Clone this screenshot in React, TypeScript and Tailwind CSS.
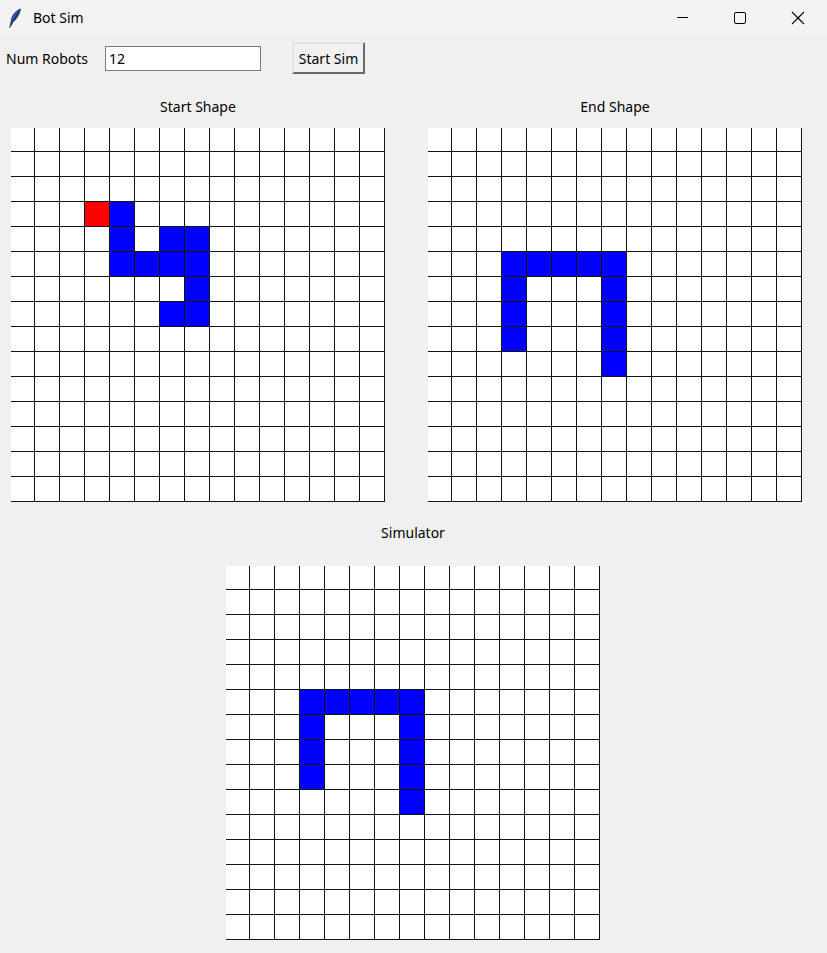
import React from "react";

type Cell = [number, number];

const startBlue: Cell[] = [
  [4, 3], [4, 4], [4, 5], [5, 5], [6, 4], [7, 4],
  [6, 5], [7, 5], [7, 6], [6, 7], [7, 7],
];
const startRed: Cell[] = [[3, 3]];

const endBlue: Cell[] = [
  [3, 5], [4, 5], [5, 5], [6, 5], [7, 5],
  [3, 6], [3, 7], [3, 8],
  [7, 6], [7, 7], [7, 8], [7, 9],
];

const has = (list: Cell[], c: number, r: number) =>
  list.some(([x, y]) => x === c && y === r);

const Board = ({ blue, red = [] }: { blue: Cell[]; red?: Cell[] }) => {
  const cells = [];
  for (let r = 0; r < 15; r++) {
    for (let c = 0; c < 15; c++) {
      let color = "bg-white";
      if (has(red, c, r)) color = "bg-[#ff0000]";
      else if (has(blue, c, r)) color = "bg-[#0000ff]";
      cells.push(
        <div
          key={`${c}-${r}`}
          className={`${color} border-r border-b border-[#141414]`}
        />
      );
    }
  }
  return (
    <div className="grid w-[374px] h-[374px] grid-cols-[24px_repeat(14,25px)] grid-rows-[24px_repeat(14,25px)] bg-white">
      {cells}
    </div>
  );
};

const Feather = () => (
  <svg width="14" height="20" viewBox="0 0 14 20">
    <path
      d="M12.5 1 C7 3 3.5 8 3 14 L2.5 17 L4 14.5 C8 12 11.5 7 12.5 1 Z"
      fill="#2a5db0"
      stroke="#1c2f55"
      strokeWidth="0.8"
    />
    <path d="M11 3 L3 17.5" stroke="#0f1c3a" strokeWidth="0.9" />
    <path d="M3 17 L1.5 19.5" stroke="#1c2f55" strokeWidth="1.2" />
  </svg>
);

export default function App() {
  return (
    <div
      className="w-[827px] h-[953px] bg-[#f0f0f0] flex flex-col text-[15px] text-black"
      style={{ fontFamily: '"Noto Sans", "Open Sans", sans-serif' }}
    >
      {/* title bar */}
      <div className="h-[35px] bg-[#f3f3f3] flex items-center">
        <div className="ml-[8px] w-[14px] flex items-center">
          <Feather />
        </div>
        <span className="ml-[11px] text-[14px]">Bot Sim</span>
        <div className="ml-auto flex items-center h-full">
          <div className="w-[58px] h-full flex items-center justify-center">
            <div className="w-[11px] h-px bg-black" />
          </div>
          <div className="w-[58px] h-full flex items-center justify-center">
            <div className="w-[12px] h-[12px] border border-black rounded-[2px]" />
          </div>
          <div className="w-[58px] h-full flex items-center justify-center">
            <svg width="14" height="14" viewBox="0 0 14 14">
              <path d="M1 1 L13 13 M13 1 L1 13" stroke="#000" strokeWidth="1.1" />
            </svg>
          </div>
        </div>
      </div>

      {/* controls */}
      <div className="mt-[7px] h-[32px] flex items-center">
        <span className="ml-[6px] w-[99px] text-[14px]">Num Robots</span>
        <div className="w-[156px] h-[25px] bg-white border border-[#7a7a7a] flex items-center pl-[3px] text-[14px]">
          12
        </div>
        <button className="ml-[31px] w-[73px] h-[32px] bg-[#f0f0f0] border-t-2 border-l-2 border-t-[#e3e3e3] border-l-[#e3e3e3] border-r-2 border-b-2 border-r-[#696969] border-b-[#696969] text-[14px] flex items-center justify-center">
          Start Sim
        </button>
      </div>

      {/* start / end shapes */}
      <div className="mt-[22px] flex pl-[11px] gap-[43px]">
        <div className="flex flex-col items-center">
          <div className="h-[20px] flex items-center text-[14px]">Start Shape</div>
          <div className="mt-[12px]">
            <Board blue={startBlue} red={startRed} />
          </div>
        </div>
        <div className="flex flex-col items-center">
          <div className="h-[20px] flex items-center text-[14px]">End Shape</div>
          <div className="mt-[12px]">
            <Board blue={endBlue} />
          </div>
        </div>
      </div>

      {/* simulator */}
      <div className="mt-[20px] flex flex-col items-center ml-[226px] w-[374px]">
        <div className="h-[20px] flex items-center text-[14px]">Simulator</div>
        <div className="mt-[24px]">
          <Board blue={endBlue} />
        </div>
      </div>
    </div>
  );
}
